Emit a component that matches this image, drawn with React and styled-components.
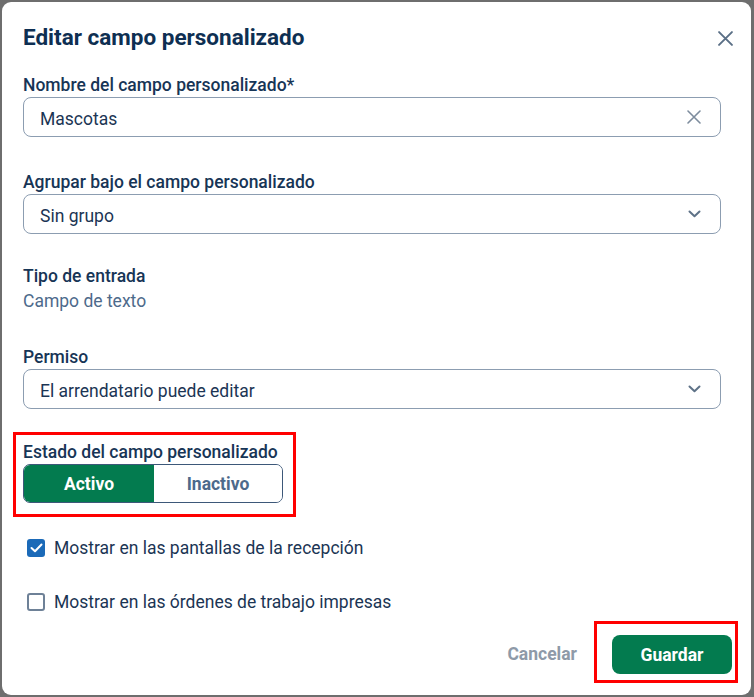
import React from "react";
import styled, { createGlobalStyle } from "styled-components";

const Global = createGlobalStyle`
  html, body { margin: 0; padding: 0; }
  body {
    background: #6e6e6e;
    font-family: Roboto, "Liberation Sans", Arial, sans-serif;
    width: 754px;
    height: 697px;
    overflow: hidden;
  }
`;

const Backdrop = styled.div`
  width: 754px;
  height: 697px;
  padding: 2px 3px 2px 2px;
  box-sizing: border-box;
`;

const Modal = styled.div`
  width: 749px;
  height: 693px;
  box-sizing: border-box;
  background: #fff;
  border-radius: 9px;
  padding: 21px 30px 0 21px;
  display: flex;
  flex-direction: column;
`;

const Header = styled.div`
  display: flex;
  align-items: center;
  justify-content: space-between;
  height: 28px;
`;

const Title = styled.h1`
  margin: 0;
  font-size: 22.5px;
  font-weight: 700;
  color: #0e2f52;
  line-height: 28px;
`;

const IconBtn = styled.button`
  border: none;
  background: none;
  padding: 0;
  display: flex;
  align-items: center;
  justify-content: center;
  margin-right: -12px;
  margin-top: 2px;
  color: #5a6f86;
  cursor: pointer;
`;

const Field = styled.div`
  display: flex;
  flex-direction: column;
  gap: ${(p) => p.$gap || 2}px;
  margin-top: ${(p) => p.$top}px;
`;

const Label = styled.div`
  font-size: 17.5px;
  font-weight: 500;
  color: #173556;
  line-height: 20px;
`;

const Value = styled.div`
  font-size: 17.5px;
  color: #4d6a8b;
  line-height: 20px;
`;

const Box = styled.div`
  height: 40px;
  box-sizing: border-box;
  border: 1px solid #8c9db1;
  border-radius: 8px;
  display: flex;
  align-items: center;
  justify-content: space-between;
  padding: 0 19px 0 16px;
  font-size: 17.5px;
  color: #1b3554;
`;

const BoxText = styled.span`
  padding-top: 3px;
`;

const Highlight = styled.div`
  border: 3px solid #ff0000;
  align-self: flex-start;
  margin: ${(p) => p.$margin};
  padding: ${(p) => p.$pad};
  display: flex;
  flex-direction: column;
  gap: 2px;
`;

const Segmented = styled.div`
  display: flex;
  width: 260px;
  height: 39px;
  box-sizing: border-box;
  border: 1px solid #3d5879;
  border-radius: 7px;
  overflow: hidden;
`;

const Segment = styled.button`
  flex: ${(p) => (p.$active ? "0 0 130px" : "1")};
  border: none;
  margin: 0;
  font-family: inherit;
  font-size: 17.5px;
  font-weight: 700;
  background: ${(p) => (p.$active ? "#037b4f" : "#fff")};
  color: ${(p) => (p.$active ? "#fff" : "#4d6a8b")};
`;

const CheckRow = styled.label`
  display: flex;
  align-items: center;
  gap: 9px;
  margin-top: ${(p) => p.$top}px;
  margin-left: 4px;
  font-size: 17.5px;
  color: #1b3554;
  line-height: 20px;
`;

const CheckBox = styled.span`
  width: 18px;
  height: 18px;
  box-sizing: border-box;
  border-radius: 3px;
  border: ${(p) => (p.$checked ? "none" : "2px solid #6e8197")};
  background: ${(p) => (p.$checked ? "#1b6ab8" : "#fff")};
  display: flex;
  align-items: center;
  justify-content: center;
`;

const Footer = styled.div`
  display: flex;
  justify-content: flex-end;
  align-items: center;
  gap: 15px;
  margin-top: 9px;
  margin-right: -17px;
`;

const TextBtn = styled.button`
  border: none;
  background: none;
  font-family: inherit;
  font-size: 17.5px;
  font-weight: 700;
  color: #8e9aa8;
  padding: 0 2px;
  margin-top: 3px;
`;

const PrimaryBtn = styled.button`
  width: 120px;
  height: 39px;
  border: none;
  border-radius: 8px;
  background: #037b4f;
  color: #fff;
  font-family: inherit;
  font-size: 17.5px;
  font-weight: 700;
`;

const XIcon = ({ size = 14, stroke = 1.8, color = "currentColor" }) => (
  <svg width={size} height={size} viewBox="0 0 14 14" fill="none">
    <path d="M1 1L13 13M13 1L1 13" stroke={color} strokeWidth={stroke} strokeLinecap="round" />
  </svg>
);

const Chevron = () => (
  <svg width="13" height="8" viewBox="0 0 13 8" fill="none">
    <path d="M1.5 1.5L6.5 6.2L11.5 1.5" stroke="#5e7287" strokeWidth="2" strokeLinecap="round" strokeLinejoin="round" />
  </svg>
);

const Check = () => (
  <svg width="13" height="10" viewBox="0 0 13 10" fill="none">
    <path d="M1.5 5L5 8.3L11.5 1.5" stroke="#fff" strokeWidth="2" strokeLinecap="round" strokeLinejoin="round" />
  </svg>
);

export default function App() {
  return (
    <>
      <Global />
      <Backdrop>
        <Modal>
          <Header>
            <Title>Editar campo personalizado</Title>
            <IconBtn aria-label="Cerrar">
              <XIcon size={15} stroke={1.8} color="#5a6f86" />
            </IconBtn>
          </Header>

          <Field $top={24}>
            <Label>Nombre del campo personalizado*</Label>
            <Box>
              <BoxText>Mascotas</BoxText>
              <XIcon size={14} stroke={1.6} color="#7d8c9d" />
            </Box>
          </Field>

          <Field $top={35}>
            <Label>Agrupar bajo el campo personalizado</Label>
            <Box>
              <BoxText>Sin grupo</BoxText>
              <Chevron />
            </Box>
          </Field>

          <Field $top={32} $gap={5}>
            <Label>Tipo de entrada</Label>
            <Value>Campo de texto</Value>
          </Field>

          <Field $top={36}>
            <Label>Permiso</Label>
            <Box>
              <BoxText>El arrendatario puede editar</BoxText>
              <Chevron />
            </Box>
          </Field>

          <Highlight $margin="23px 0 0 -10px" $pad="7px 10px 11px 7px">
            <Label>Estado del campo personalizado</Label>
            <Segmented>
              <Segment $active>Activo</Segment>
              <Segment>Inactivo</Segment>
            </Segmented>
          </Highlight>

          <CheckRow $top={21}>
            <CheckBox $checked>
              <Check />
            </CheckBox>
            Mostrar en las pantallas de la recepción
          </CheckRow>

          <CheckRow $top={34}>
            <CheckBox />
            Mostrar en las órdenes de trabajo impresas
          </CheckRow>

          <Footer>
            <TextBtn>Cancelar</TextBtn>
            <Highlight $pad="11px 3px 6px 15px" $margin="0">
              <PrimaryBtn>Guardar</PrimaryBtn>
            </Highlight>
          </Footer>
        </Modal>
      </Backdrop>
    </>
  );
}
